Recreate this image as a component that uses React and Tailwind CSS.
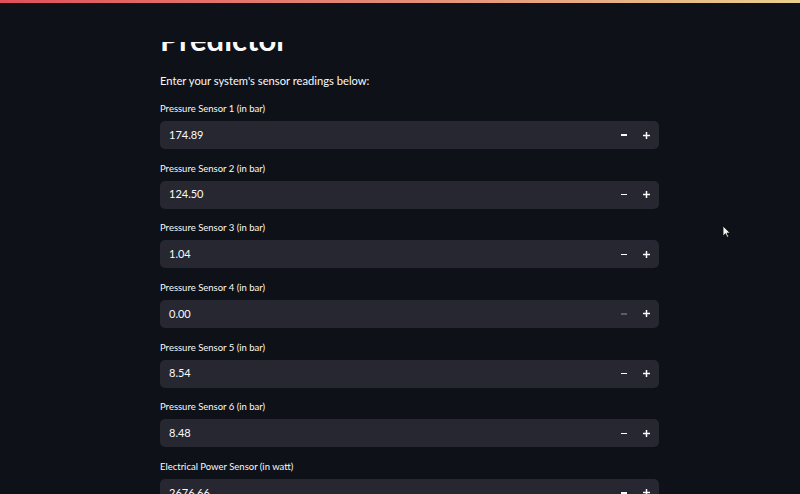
const fields = [
  { label: 'Pressure Sensor 1 (in bar)', value: '174.89' },
  { label: 'Pressure Sensor 2 (in bar)', value: '124.50' },
  { label: 'Pressure Sensor 3 (in bar)', value: '1.04' },
  { label: 'Pressure Sensor 4 (in bar)', value: '0.00', atMin: true },
  { label: 'Pressure Sensor 5 (in bar)', value: '8.54' },
  { label: 'Pressure Sensor 6 (in bar)', value: '8.48' },
  { label: 'Electrical Power Sensor (in watt)', value: '2676.66' },
]

function NumberInput({ label, value, atMin }) {
  return (
    <div className="flex flex-col">
      <div className="h-[16px] flex items-center text-[9.5px] text-[#fafafa]">{label}</div>
      <div className="mt-[4px] h-[28px] rounded-[5px] bg-[#262730] flex items-center">
        <div className="flex-1 pl-[9px] text-[11px] text-[#fafafa]">{value}</div>
        <button className="w-[23px] h-full flex items-center justify-center">
          <span className={atMin ? 'block w-[6px] h-[1.5px] bg-[#5c5d66]' : 'block w-[6px] h-[1.5px] bg-[#fafafa]'} />
        </button>
        <button className="w-[23px] h-full flex items-center justify-center mr-[1px]">
          <svg width="7" height="7" viewBox="0 0 7 7">
            <path d="M3.5 0v7M0 3.5h7" stroke="#fafafa" strokeWidth="1.5" />
          </svg>
        </button>
      </div>
    </div>
  )
}

export default function App() {
  return (
    <div className="relative h-[494px] w-[800px] overflow-hidden bg-[#0e1117]" style={{ fontFamily: 'Lato, "Noto Sans", sans-serif' }}>
      {/* app header sits over the scrolled title */}
      <div className="absolute top-0 left-0 right-0 h-[42px] bg-[#0e1117] z-10">
        <div className="h-[3px] bg-gradient-to-r from-[#e0505c] via-[#e48c78] to-[#ead08c]" />
      </div>

      <div className="ml-[160px] w-[499px] pt-[21px]">
        <h1 className="text-[31px] leading-[37px] font-bold text-[#fafafa]">Predictor</h1>
        <p className="mt-[15px] text-[11.2px] leading-[16px] text-[#fafafa]">Enter your system's sensor readings below:</p>
        <div className="mt-[12px] flex flex-col gap-[11.67px]">
          {fields.map((f) => (
            <NumberInput key={f.label} {...f} />
          ))}
        </div>
      </div>

      <svg className="absolute left-[722px] top-[225px]" width="9" height="13" viewBox="0 0 9 13">
        <path d="M1 1v10l2.5-2.3 1.6 3.6 1.5-.7-1.6-3.5H8.2z" fill="#f2f2f2" stroke="#111" strokeWidth="0.8" />
      </svg>
    </div>
  )
}
